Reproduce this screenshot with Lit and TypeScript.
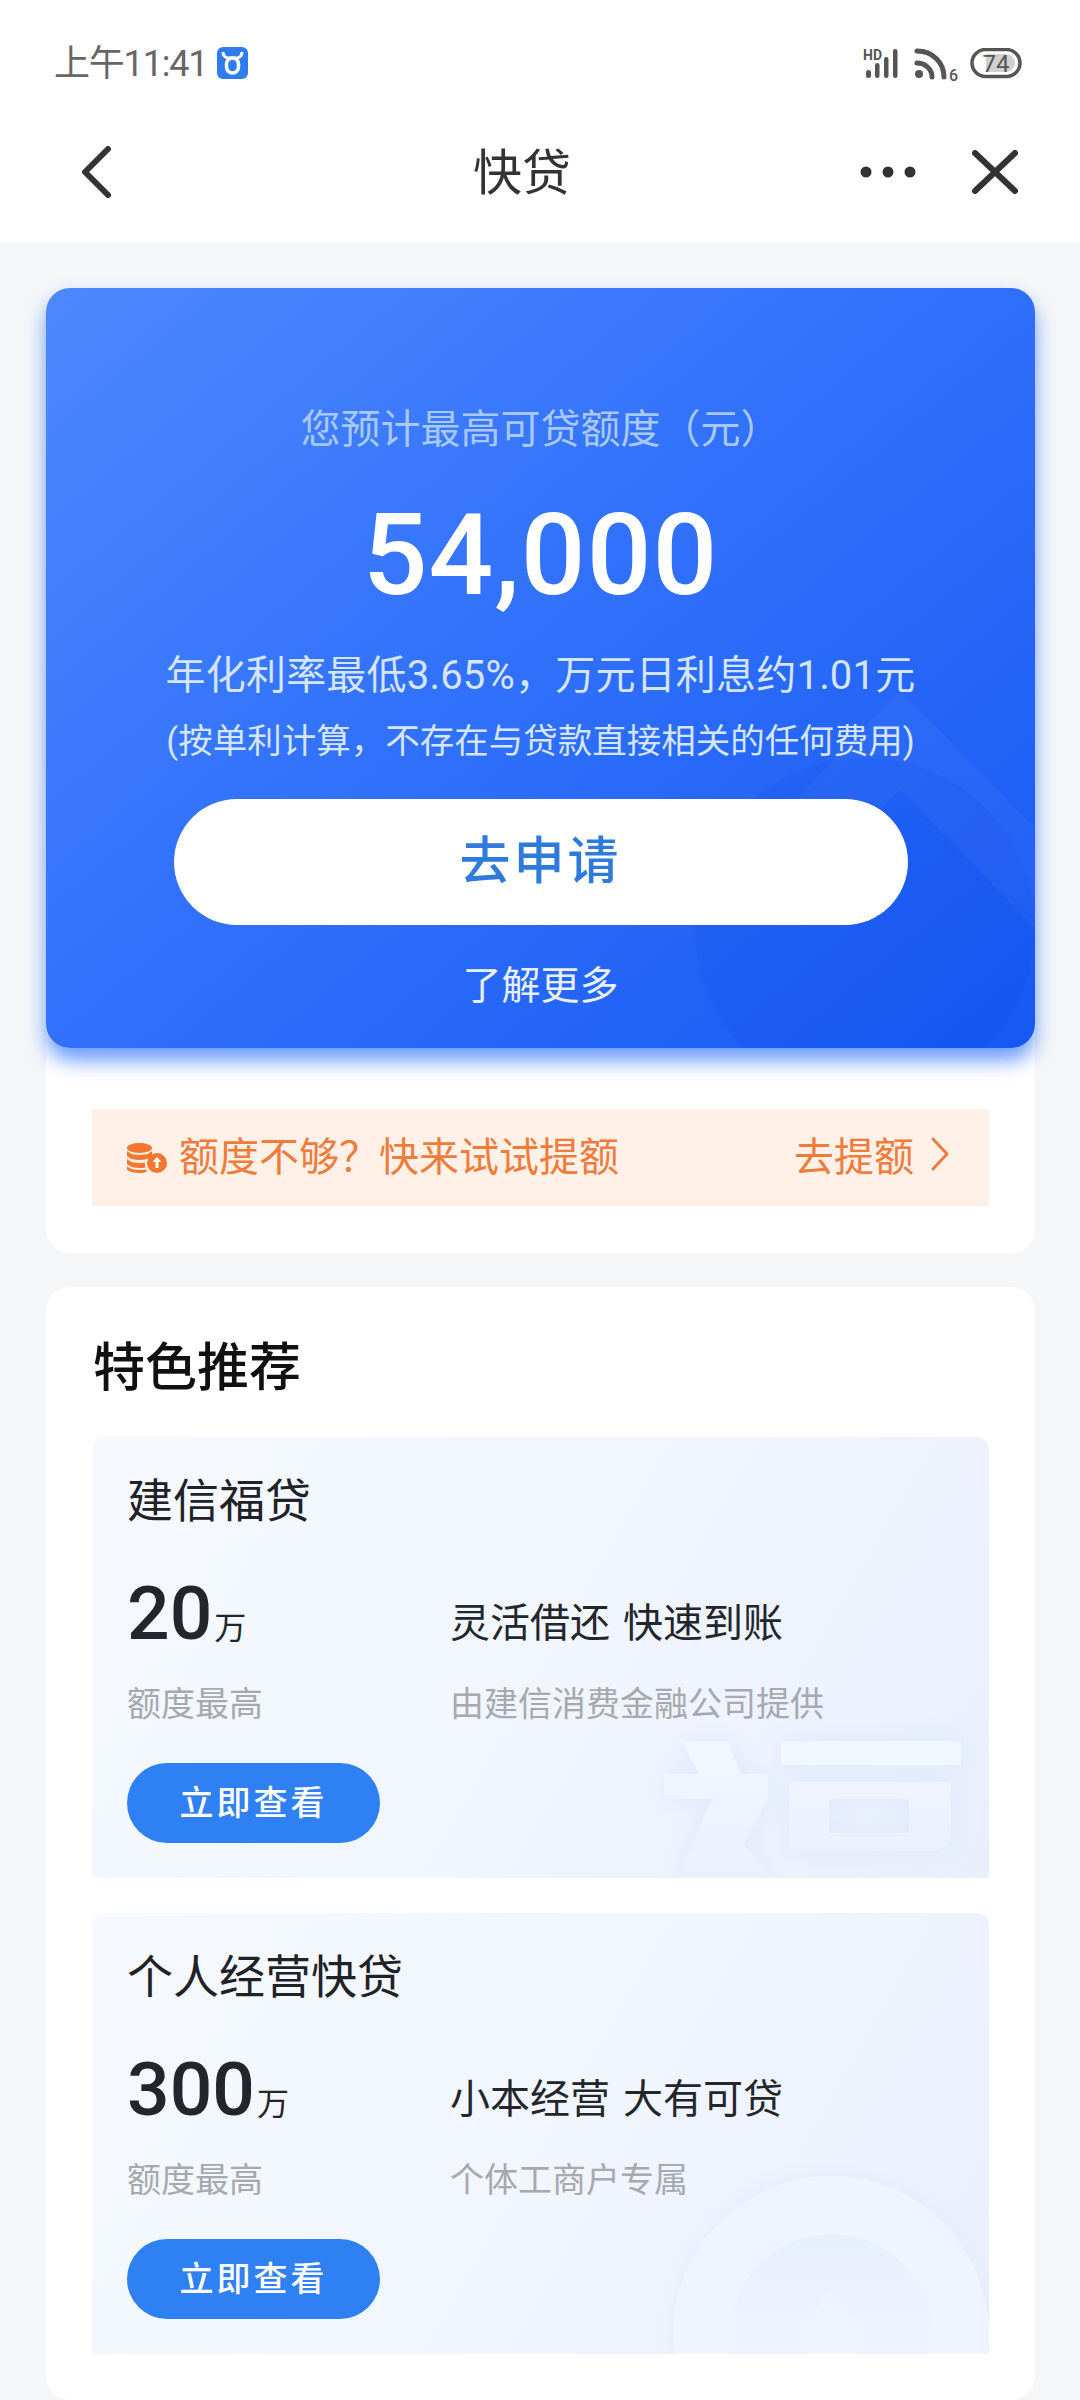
import { LitElement, html, css, svg } from "lit";
import { customElement } from "lit/decorators.js";

const products = [
  {
    name: "建信福贷",
    amount: "20",
    slogan: "灵活借还 快速到账",
    note: "由建信消费金融公司提供",
    mark: "glyph",
  },
  {
    name: "个人经营快贷",
    amount: "300",
    slogan: "小本经营 大有可贷",
    note: "个体工商户专属",
    mark: "coin",
  },
];

const glyphShapes = svg`
  <path d="M40 50H87L100 83H127V108L103 153L130 187H37L70 108H23V83H58Z" />
  <path fill-rule="evenodd" d="M140 50H320V74H140ZM148 91H310V140Q310 160 290 160H148ZM188 108V142H268V108Z" />
`;

const glyphMark = svg`
  <svg class="mark glyph" viewBox="0 0 348 187" aria-hidden="true">
    <defs>
      <filter id="gb" x="-20%" y="-30%" width="140%" height="160%">
        <feGaussianBlur stdDeviation="12" />
      </filter>
      <linearGradient id="gf" x1="0" y1="0" x2="0" y2="1">
        <stop offset="0.2" stop-color="#f1f6ff" />
        <stop offset="1" stop-color="#eaf1fd" />
      </linearGradient>
    </defs>
    <g fill="#dde8fb" filter="url(#gb)">${glyphShapes}</g>
    <g fill="url(#gf)">${glyphShapes}</g>
  </svg>
`;

const coinMark = svg`
  <svg class="mark coin" viewBox="0 0 330 190" aria-hidden="true">
    <defs>
      <filter id="cb" x="-20%" y="-30%" width="140%" height="160%">
        <feGaussianBlur stdDeviation="10" />
      </filter>
      <linearGradient id="cf" x1="0" y1="0" x2="0" y2="1">
        <stop offset="0" stop-color="#e7effc" />
        <stop offset="0.5" stop-color="#eef4ff" />
      </linearGradient>
    </defs>
    <circle cx="172" cy="170" r="160" fill="#e4edfb" filter="url(#cb)" />
    <circle cx="172" cy="170" r="158" fill="#eff5ff" />
    <circle cx="172" cy="170" r="100" fill="url(#cf)" />
    <path d="M172 129l43 41-43 41-43-41z" fill="#eff4fe" />
  </svg>
`;

@customElement("app-root")
export class AppRoot extends LitElement {
  static override styles = css`
    :host {
      display: block;
      width: 1080px;
      height: 2400px;
      overflow: hidden;
      background: #f4f6f8;
      font-family: Roboto, "Noto Sans CJK SC", sans-serif;
      color: #1f2227;
    }

    .top {
      background: #fff;
      height: 242px;
    }

    .status {
      height: 126px;
      padding: 46px 58px 0 54px;
      box-sizing: border-box;
      display: flex;
      align-items: flex-start;
      justify-content: space-between;
    }

    .clock {
      display: flex;
      align-items: center;
      gap: 10px;
      font-size: 36px;
      line-height: 34px;
      letter-spacing: -1.200px;
      color: #666;
    }

    .clock span {
      position: relative;
      top: 1px;
    }

    .indicators {
      display: block;
      margin-top: 2px;
    }

    .nav {
      display: flex;
      align-items: center;
      height: 116px;
      box-sizing: border-box;
      padding: 0 62px 24px 80px;
      position: relative;
      justify-content: space-between;
    }

    .nav .title {
      position: absolute;
      left: 0;
      right: 36px;
      top: 18px;
      text-align: center;
      font-size: 49px;
      line-height: 60px;
      color: #333;
    }

    .nav-right {
      display: flex;
      align-items: center;
      gap: 56px;
    }

    .page {
      padding: 46px 45px 0 46px;
      display: flex;
      flex-direction: column;
      gap: 34px;
    }

    .panel {
      background: #fff;
      border-radius: 24px;
    }

    .hero-wrap {
      border-radius: 24px;
      box-shadow: 0 14px 20px -3px rgba(30, 105, 250, 0.6),
        0 10px 22px rgba(30, 105, 250, 0.22);
    }

    .hero {
      position: relative;
      height: 760px;
      border-radius: 24px;
      overflow: hidden;
      color: #fff;
      text-align: center;
      background: linear-gradient(140deg, #4c89ff 0%, #3272fb 45%, #1758f4 100%);
      display: flex;
      flex-direction: column;
      align-items: center;
    }

    .hero-mark {
      position: absolute;
      right: 0;
      bottom: 0;
      width: 360px;
      height: 420px;
    }

    .hero > div {
      position: relative;
    }

    .limit-label {
      margin-top: 114px;
      font-size: 40px;
      line-height: 56px;
      color: #a8c8fb;
    }

    .limit {
      margin-top: 32px;
      font-size: 114px;
      font-weight: 500;
      line-height: 130px;
      letter-spacing: 1px;
    }

    .rate {
      margin-top: 28px;
      font-size: 40px;
      line-height: 56px;
      letter-spacing: 0.200px;
      color: #d5e4ff;
    }

    .rate-note {
      margin-top: 13px;
      font-size: 34.500px;
      line-height: 48px;
      color: #d5e4ff;
    }

    .apply {
      margin-top: 34px;
      width: 734px;
      height: 126px;
      border-radius: 63px;
      background: #fff;
      color: #2f7bdc;
      font-size: 51px;
      font-weight: 500;
      letter-spacing: 3px;
      line-height: 126px;
    }

    .more {
      margin-top: 33px;
      font-size: 39px;
      line-height: 56px;
      color: #e6f0ff;
    }

    .boost {
      margin: 61px 46px 47px;
      height: 97px;
      box-sizing: border-box;
      padding: 0 39px 7px 35px;
      background: #fff0e8;
      color: #ef7c3b;
      display: flex;
      align-items: center;
      font-size: 40px;
    }

    .boost > svg {
      margin: 7px 12px 0 0;
    }

    .boost .go {
      margin-left: auto;
      display: flex;
      align-items: center;
      gap: 16px;
    }

    .featured {
      padding: 0 46px 42px;
      height: 1113px;
      box-sizing: border-box;
    }

    .featured h2 {
      margin: 0;
      padding: 46px 0 33px 1px;
      font-size: 52px;
      line-height: 71px;
      font-weight: 500;
      color: #111;
    }

    .list {
      display: flex;
      flex-direction: column;
      gap: 35px;
    }

    .product {
      position: relative;
      height: 441px;
      padding: 37px 35px 0;
      box-sizing: border-box;
      border-radius: 12px 12px 0 0;
      overflow: hidden;
      background: linear-gradient(120deg, #f6f9ff 0%, #f1f5fe 55%, #e8effc 100%);
    }

    .mark {
      position: absolute;
      display: block;
      right: 0;
      bottom: 0;
    }

    .mark.glyph {
      width: 348px;
      height: 187px;
    }

    .mark.coin {
      width: 330px;
      height: 190px;
    }

    .name {
      position: relative;
      font-size: 46px;
      line-height: 54px;
    }

    .facts {
      position: relative;
      display: grid;
      grid-template-columns: 323px 1fr;
      margin-top: 40px;
    }

    .amount {
      display: flex;
      align-items: baseline;
      height: 90px;
      font-size: 75px;
      line-height: 90px;
      font-weight: 500;
      color: #23262b;
    }

    .amount span {
      font-size: 32px;
      font-weight: 400;
      margin-left: 2px;
    }

    .slogan {
      align-self: end;
      margin-bottom: 6px;
      font-size: 40px;
      line-height: 56px;
      word-spacing: 3px;
      color: #23262b;
      white-space: pre;
    }

    .caption {
      margin-top: 22px;
      font-size: 34px;
      line-height: 48px;
      color: #a6a9af;
    }

    .view {
      position: relative;
      margin-top: 35px;
      width: 253px;
      height: 80px;
      border-radius: 40px;
      background: #2f80f2;
      color: #fff;
      text-align: center;
      font-size: 34px;
      font-weight: 500;
      line-height: 80px;
      letter-spacing: 3px;
    }
  `;

  override render() {
    return html`
      <div class="top">
        <div class="status">
          <div class="clock">
            <span>上午11:41</span>
            ${this.appBadge()}
          </div>
          ${this.indicators()}
        </div>
        <div class="nav">
          <svg width="32" height="52" viewBox="0 0 32 52">
            <path d="M28 3L5 26l23 23" fill="none" stroke="#333" stroke-width="6" stroke-linecap="round" stroke-linejoin="round" />
          </svg>
          <div class="title">快贷</div>
          <div class="nav-right">
            <svg width="56" height="12" viewBox="0 0 56 12">
              <circle cx="6" cy="6" r="5.500" fill="#333" />
              <circle cx="28" cy="6" r="5.500" fill="#333" />
              <circle cx="50" cy="6" r="5.500" fill="#333" />
            </svg>
            <svg width="46" height="44" viewBox="0 0 46 44">
              <path d="M3 3l40 38M43 3L3 41" fill="none" stroke="#333" stroke-width="6" stroke-linecap="round" />
            </svg>
          </div>
        </div>
      </div>

      <div class="page">
        <section class="panel">
          <div class="hero-wrap">
            <div class="hero">
              <svg class="hero-mark" viewBox="0 0 360 420" aria-hidden="true">
                <circle cx="190" cy="300" r="170" fill="#0f4ce6" opacity="0.16" />
                <path d="M225 62L360 200V300L225 162L130 255L85 210Z" fill="#fff" opacity="0.035" />
              </svg>
              <div class="limit-label">您预计最高可贷额度（元）</div>
              <div class="limit">54,000</div>
              <div class="rate">年化利率最低3.65%，万元日利息约1.01元</div>
              <div class="rate-note">(按单利计算，不存在与贷款直接相关的任何费用)</div>
              <div class="apply">去申请</div>
              <div class="more">了解更多</div>
            </div>
          </div>
          <div class="boost">
            <svg width="40" height="30" viewBox="0 0 40 30">
              <g fill="#f2772f">
                <ellipse cx="12.500" cy="5" rx="12.500" ry="5" />
                <path d="M0 8c3 3 8 4 12.500 4S22 11 25 8v5c-3 3-8 4-12.500 4S3 16 0 13z" />
                <path d="M0 16c3 3 8 4 12.500 4 2 0 3.500 0 5-.500l1 5c-2 .500-4 .500-6 .500C8 25 3 24 0 21z" />
                <path d="M0 23.500c3 2.500 8 3.500 12.500 3.500 2 0 5 0 6.500-.500l1 2.500c-2 .500-5 1-7.500 1C8 30 3 29 0 27z" />
                <circle cx="30" cy="20" r="10" />
              </g>
              <path d="M30 14l-4.500 5h3v6h3v-6h3z" fill="#fff" />
            </svg>
            <span>额度不够？快来试试提额</span>
            <span class="go">
              去提额
              <svg width="20" height="36" viewBox="0 0 20 36">
                <path d="M3 3l14 15L3 33" fill="none" stroke="#ef7c3b" stroke-width="3" stroke-linecap="round" stroke-linejoin="round" />
              </svg>
            </span>
          </div>
        </section>

        <section class="panel featured">
          <h2>特色推荐</h2>
          <div class="list">
            ${products.map(
              (p) => html`
                <article class="product">
                  ${p.mark === "glyph" ? glyphMark : coinMark}
                  <div class="name">${p.name}</div>
                  <div class="facts">
                    <div class="amount">${p.amount}<span>万</span></div>
                    <div class="slogan">${p.slogan}</div>
                    <div class="caption">额度最高</div>
                    <div class="caption">${p.note}</div>
                  </div>
                  <div class="view">立即查看</div>
                </article>
              `
            )}
          </div>
        </section>
      </div>
    `;
  }

  appBadge() {
    return html`<svg width="31" height="32" viewBox="0 0 31 32">
      <rect width="31" height="32" rx="6" fill="#2f7cf0" />
      <path d="M6 5c0 3 2 6 5 6h9c3 0 5-3 5-6" fill="none" stroke="#fff" stroke-width="3" />
      <rect x="9.500" y="11" width="12" height="15" rx="6" fill="none" stroke="#fff" stroke-width="3.500" />
    </svg>`;
  }

  indicators() {
    return html`<svg class="indicators" width="160" height="36" viewBox="0 0 160 36">
      <text x="1" y="12" font-family="Roboto, sans-serif" font-size="14" font-weight="700" fill="#555">HD</text>
      <g fill="#555">
        <rect x="4" y="22" width="5" height="8" rx="2.500" />
        <rect x="13" y="15" width="4.500" height="15" rx="2.200" />
        <rect x="22" y="9" width="4.500" height="21" rx="2.200" />
        <rect x="31" y="1" width="4.500" height="29" rx="2.200" />
        <circle cx="57" cy="26" r="4" />
      </g>
      <g fill="none" stroke="#555" stroke-width="5" stroke-linecap="round">
        <path d="M55 15c8 0 15 6 15 14" />
        <path d="M55 3c16 0 27 12 27 26" />
      </g>
      <text x="87" y="33" font-family="Roboto, sans-serif" font-size="16" font-weight="500" fill="#555">6</text>
      <rect x="110" y="1.500" width="48" height="27" rx="13.500" fill="none" stroke="#555" stroke-width="3.500" />
      <path d="M124 6h20a9 9 0 0 1 0 18h-20z" fill="#d0d0d0" />
      <text x="134" y="24" text-anchor="middle" font-family="Roboto, sans-serif" font-size="24" fill="#555">74</text>
    </svg>`;
  }
}
